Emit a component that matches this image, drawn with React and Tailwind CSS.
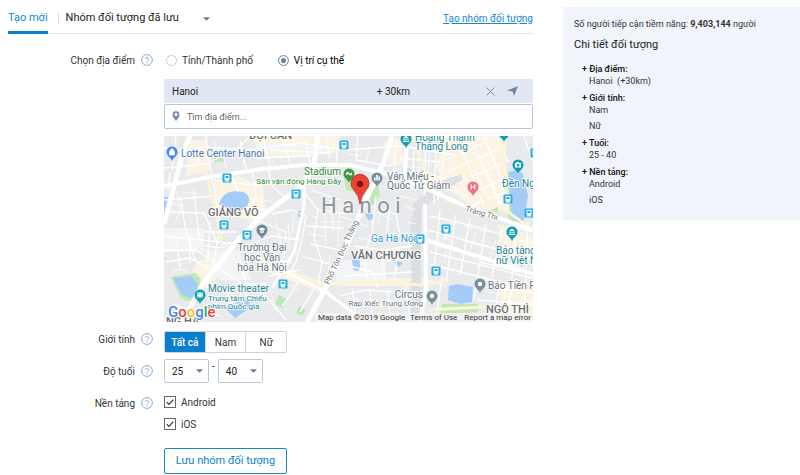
import React, { useState } from 'react';

const MINOR_ROADS = [
  'M164 148L186 151L204 147L250 150L300 143L345 150L400 146L460 156',
  'M164 168L205 164L236 150L250 136',
  'M176 136L172 170M206 136L212 180L220 222L214 262',
  'M164 200L190 198L214 196M168 212L204 213L216 240L232 248',
  'M180 196L186 232L196 262M194 190L199 238',
  'M164 236L202 240L236 244M164 250L196 250L214 262L206 290',
  'M166 262L190 258L212 270M176 236L180 268M190 236L190 262',
  'M232 176L238 192M252 170L256 196L248 214L262 222M268 168L272 186L288 200',
  'M240 140L246 170M262 136L270 166M284 136L290 164M306 140L310 164M326 136L330 158',
  'M270 150L330 153M256 158L310 156M338 140L336 166M358 136L356 160L390 166',
  'M272 214L292 210L306 216L302 240L296 262L280 290',
  'M250 244L272 236L300 240M258 258L292 262M268 276L300 270M262 222L286 232L284 258',
  'M240 262L248 290L266 296L286 320M220 270L240 282L252 306',
  'M228 256L216 272M224 300L236 284L266 284M300 280L282 306M316 286L300 312',
  'M304 192L318 210L314 238L322 262L318 284M312 190L340 200M318 210L348 214',
  'M306 226L344 228M310 244L340 250M302 256L336 266M330 200L334 230',
  'M368 206L396 214L400 236M376 196L372 232L366 250M390 206L386 238M354 246L384 250L412 246',
  'M350 266L372 272L378 288M364 262L368 280M380 250L386 284M398 248L394 284M344 276L412 272',
  'M340 296L366 290L396 292M352 288L356 316M370 290L372 316M388 292L390 318M406 286L410 318',
  'M386 150L382 166M396 140L394 184M414 150L412 190M426 140L424 196M436 150L434 204',
  'M400 158L440 162M408 172L446 178M422 186L460 192M446 140L438 200',
  'M430 216L474 226L532 244M428 230L500 250M430 252L532 278M440 210L434 270M456 214L446 282',
  'M470 218L460 276M486 224L474 300M502 230L492 276M516 234L508 320M430 264L500 282M442 276L436 320',
  'M462 240L492 248M452 222L444 240M480 262L520 272M428 280L446 286M478 300L532 304M500 282L494 320',
  'M456 136L466 160L484 206M470 136L480 160L500 204M484 136L498 170L508 206M496 136L508 160',
  'M448 172L500 148M456 184L510 160M462 196L508 178M470 206L506 192M446 160L486 142',
  'M524 136L532 160M528 222L524 322M508 226L532 232M474 286L532 292M340 216L352 220M176 306L220 316',
  'M204 232L236 232M206 246L226 248M210 222L208 258M220 228L222 246M170 172L168 190M214 180L262 186',
];

const ALLEYS = [
  'M196 152L200 164M214 140L218 158M222 150L226 168M176 190L180 210L174 226M184 192L198 194M172 204L186 206',
  'M258 198L272 202M256 208L270 212M262 190L262 216M276 222L282 248M288 222L290 250M294 214L292 232',
  'M312 216L318 218M308 234L326 236M320 222L344 222M324 204L326 244M340 204L338 246M330 256L328 276',
  'M356 224L368 226M376 212L392 220M380 206L378 226M358 238L370 240M360 280L360 290M382 260L396 262',
  'M400 196L416 200M404 206L416 210M406 222L416 224M418 152L420 186M430 146L428 184M402 166L422 168',
  'M436 236L452 240M438 246L470 254M446 250L444 264M464 226L490 232M476 232L470 250M496 240L490 258',
  'M500 262L520 266M484 280L506 284M486 292L506 294M506 284L504 304M446 148L492 136M470 150L492 166',
  'M474 170L486 196M482 162L496 190M452 168L460 178M490 180L502 204M346 298L360 300M374 304L388 306',
  'M250 298L264 300M240 290L244 304M270 288L276 312M290 284L300 292M206 268L220 290M172 270L188 270',
  'M272 160L276 166M280 144L296 146M312 146L324 148M348 154L362 156M370 146L366 164M216 300L240 306',
];

const MAIN_ROADS = [
  { d: 'M190 136L183 152L164 224', w: 5 },
  { d: 'M164 186L210 177L262 169L304 165L350 165L402 178L470 208L533 230', w: 4 },
  { d: 'M182 322L204 282L238 240L262 216L304 184L314 164L318 136', w: 5 },
  { d: 'M307 322L324 291L350 238L364 204L384 162L392 136', w: 5 },
  { d: 'M407 136L405 176', w: 4 },
  { d: 'M425 204L426 290L420 322', w: 4 },
  { d: 'M426 240L480 257L533 274', w: 4 },
  { d: 'M262 268L274 266L324 291L366 322', w: 3 },
  { d: 'M304 186L304 206L294 252L272 288', w: 3 },
];

const SECONDARY_ROADS = [
  'M204 166L214 204L222 244',
  'M256 260L324 288L360 322',
  'M324 284L372 282L424 285L448 280',
  'M414 136L424 168L446 200L464 206',
  'M454 136L462 168L490 206',
  'M500 136L506 174L508 212L530 228',
  'M428 310L500 306L533 308',
];

const TRANSIT = [
  [227, 178], [344, 145], [296, 194], [224, 225], [247, 235], [283, 284],
  [508, 199], [529, 213], [446, 229], [420, 239], [436, 271], [535, 153],
];

const PINS = [
  { x: 172, y: 152, color: '#4285f4', icon: 'bag' },
  { x: 349, y: 174, color: '#3c9c3f', icon: 'leaf' },
  { x: 377, y: 178, color: '#78909c', icon: 'chart' },
  { x: 406, y: 139, color: '#12a0ad', icon: 'museum' },
  { x: 504, y: 133, color: '#12a0ad', icon: 'museum' },
  { x: 518, y: 165, color: '#12a0ad', icon: 'camera' },
  { x: 473, y: 187, color: '#f06e82', icon: 'hospital' },
  { x: 262, y: 230, color: '#6f8796', icon: 'school' },
  { x: 512, y: 232, color: '#12a0ad', icon: 'museum' },
  { x: 200, y: 295, color: '#12a0ad', icon: 'film' },
  { x: 432, y: 296, color: '#78909c', icon: 'dot' },
  { x: 480, y: 284, color: '#78909c', icon: 'dot' },
];

const GLYPHS = {
  bag: <path d="M-2.5 -1h5v4h-5zM-1.3 -1v-1a1.3 1.3 0 0 1 2.6 0v1" fill="#fff" stroke="#fff" strokeWidth=".7" />,
  leaf: <path d="M-3 -1q2 -2 3 0t3 -1v3q-2 1 -3 -.5t-3 1z" fill="#fff" />,
  chart: <path d="M-3 2.5v-3h1.6v3zM-.8 2.5v-5.5h1.6v5.5zM1.4 2.5v-4h1.6v4z" fill="#fff" />,
  museum: <path d="M-3 -1L0 -3.2L3 -1zM-2.6 -.4h1.2v2h-1.2zM-.6 -.4h1.2v2h-1.2zM1.4 -.4h1.2v2h-1.2zM-3 2h6v1h-6z" fill="#fff" />,
  camera: <path fillRule="evenodd" d="M-3 -2h1.4l.6 -1h2l.6 1h1.4v4.5h-6zM0 -1.2a1.4 1.4 0 1 0 .01 0z" fill="#fff" />,
  hospital: <path d="M-1.8 -2.5v5M1.8 -2.5v5M-1.8 0h3.6" fill="none" stroke="#fff" strokeWidth="1.2" />,
  school: <path d="M-3.6 -.8L0 -2.6L3.6 -.8L0 1zM-2 .8L0 1.8L2 .8v1.4L0 3.2L-2 2.2z" fill="#fff" />,
  film: <path fillRule="evenodd" d="M-2.8 -2.5h5.6v5h-5.6zM-2 -1.8v1h1v-1zM-2 .8v1h1v-1zM1 -1.8v1h1v-1zM1 .8v1h1v-1z" fill="#fff" />,
  dot: <circle r="2.2" fill="#fff" />,
};

const TEAL = '#1e8794';
const SLATE = '#66737f';
const DISTRICT = '#6a6f74';

const PLACE_LABELS = [
  { x: 249, y: 139, text: 'ĐỘI CẤN', color: DISTRICT, size: 11, bold: true },
  { x: 181, y: 157, text: 'Lotte Center Hanoi', color: '#4a75b5', size: 10 },
  { x: 341, y: 175, text: 'Stadium', color: '#2f8b35', size: 10, anchor: 'end' },
  { x: 341, y: 184, text: 'Sân vận động Hàng Đẫy', color: '#2f8b35', size: 8, anchor: 'end' },
  { x: 208, y: 216, text: 'GIẢNG VÕ', color: DISTRICT, size: 11, bold: true },
  { x: 262, y: 251, text: 'Trường Đại', color: SLATE, size: 10, anchor: 'middle' },
  { x: 262, y: 261, text: 'học Văn', color: SLATE, size: 10, anchor: 'middle' },
  { x: 262, y: 271, text: 'hóa Hà Nội', color: SLATE, size: 10, anchor: 'middle' },
  { x: 208, y: 292, text: 'Movie theater', color: TEAL, size: 10 },
  { x: 208, y: 301, text: 'Trung tâm Chiếu', color: TEAL, size: 8 },
  { x: 208, y: 309, text: 'phim Quốc gia', color: TEAL, size: 8 },
  { x: 166, y: 325, text: 'NG HẠ', color: DISTRICT, size: 11, bold: true },
  { x: 387, y: 180, text: 'Văn Miếu -', color: SLATE, size: 10 },
  { x: 387, y: 189, text: 'Quốc Tử Giám', color: SLATE, size: 10 },
  { x: 415, y: 141, text: 'Hoàng Thành', color: TEAL, size: 10 },
  { x: 415, y: 150, text: 'Thăng Long', color: TEAL, size: 10 },
  { x: 502, y: 187, text: 'Đền Ng', color: TEAL, size: 10 },
  { x: 371, y: 242, text: 'Ga Hà Nội', color: '#2f9ccc', size: 10 },
  { x: 351, y: 259, text: 'VĂN CHƯƠNG', color: DISTRICT, size: 11, bold: true },
  { x: 423, y: 298, text: 'Circus', color: SLATE, size: 10, anchor: 'end' },
  { x: 423, y: 306, text: 'Rạp Xiếc Trung Ương', color: SLATE, size: 8, anchor: 'end' },
  { x: 488, y: 289, text: 'Báo Tiền P', color: SLATE, size: 10 },
  { x: 496, y: 254, text: 'Bảo tàng', color: TEAL, size: 10 },
  { x: 496, y: 264, text: 'nữ Việt N', color: TEAL, size: 10 },
  { x: 486, y: 313, text: 'NGÔ THÌ', color: DISTRICT, size: 11, bold: true },
  { x: 465, y: 211, text: 'Tràng Thi', color: '#777', size: 8, rotate: 16 },
  { x: 329, y: 285, text: 'Phố Tôn Đức Thắng', color: '#777', size: 8, rotate: -65 },
];

function MapView() {
  return (
    <svg
      viewBox="164 136 369 186"
      preserveAspectRatio="xMidYMid slice"
      className="mt-[7px] block h-[186px] w-full font-['Roboto',sans-serif]"
      role="img"
      aria-label="Hanoi"
    >
      <rect x="164" y="136" width="369" height="186" fill="#e9eaec" />

      {/* Commercial areas */}
      <g fill="#fbf4e4">
        <path d="M190 140h16l4 30l-24 6zM214 182l24 -6l18 8l8 24l-16 12l-32 -8zM250 136l90 0l-6 18l-70 4z" />
        <path d="M196 262l18 -6l6 20l-16 12l-14 -8zM232 186l30 -6l4 30l-16 14zM268 262l60 22l-4 10l-60 -24z" />
        <path d="M340 278h84v8h-84zM444 136h62l2 76l-34 -4l-30 -22l-8 -20zM500 282h33v40h-33zM498 224l35 12v26l-30 -10z" />
        <path d="M384 142l16 -4l4 26l-14 2zM424 170l24 10l-8 14l-16 -4z" />
      </g>
      <g fill="#f3f4f5">
        <path d="M256 144h70v8h-70zM204 250l34 0l14 30l-32 0zM164 228h40v24h-40zM336 260h50v22h-50z" />
      </g>

      {/* Parks */}
      <g fill="#c0e8b4">
        <path d="M171 277l25 -4l5 6l-4 24l-16 -4zM344 176h14l4 18l-16 -4zM370 194l8 -10l2 12l-10 12z" />
        <path d="M214 158h10v4h-10zM405 164l8 8l-10 2zM490 210l8 -3v6zM442 304h36v8l-38 2z" />
        <path d="M279 295l8 4l-4 9l-8 -4zM299 306l7 4l-4 6l-6 -3zM504 176l6 -6l4 52l-6 -4z" />
      </g>

      {/* Water */}
      <g fill="#a3ccf8">
        <path d="M219 204q4 -13 18 -13q13 1 12 11q-3 9 -14 9q-6 -1 -16 -7z" />
        <path d="M173 278l18 -2l7 8l-3 16l-14 -6zM164 197h5l-2 18l-3 4zM225 308l18 -8l12 -2l-8 12l-12 8z" />
        <path d="M509 172q8 -4 14 2l5 22l-5 28l-10 -4l-3 -18zM449 286l8 -2l16 3l-1 15l-12 2l-12 -4z" />
        <path d="M352 260q5 -3 8 1v8q-4 4 -7 0zM365 214l6 -2l3 5l-5 4zM298 211h4v6h-4zM391 259l12 4l-4 4z" />
      </g>

      {/* Railway */}
      <path d="M417 322V206L440 186L462 178" fill="none" stroke="#dcdee1" strokeWidth="8" />
      <path d="M412 216V322M422 210L446 186" fill="none" stroke="#cfd2d6" strokeWidth="1" />

      <g fill="none" stroke="#fff" strokeLinejoin="round">
        {ALLEYS.map((d) => (
          <path key={d} d={d} strokeWidth=".8" />
        ))}
        {MINOR_ROADS.map((d) => (
          <path key={d} d={d} strokeWidth="1.3" />
        ))}
        {SECONDARY_ROADS.map((d) => (
          <path key={d} d={d} strokeWidth="3" stroke="#fdf3d6" />
        ))}
        {MAIN_ROADS.map((road) => (
          <path key={road.d} d={road.d} strokeWidth={road.w} />
        ))}
      </g>

      {TRANSIT.map(([x, y]) => (
        <g key={`${x}-${y}`} transform={`translate(${x} ${y})`}>
          <rect x="-4.5" y="-4.5" width="9" height="9" rx="1" fill="#27b0e6" />
          <path fillRule="evenodd" d="M-2.5 -3h5v5l-1 .5l.8 1h-4.6l.8 -1l-1 -.5zM-1.6 -2v2h3.2v-2z" fill="#fff" />
        </g>
      ))}

      <text x="321" y="213" fontSize="22" fill="#8e949c" stroke="#f4f5f6" strokeWidth="2" paintOrder="stroke">
        H a n o i
      </text>

      {PLACE_LABELS.map((label) => (
        <text
          key={label.text}
          x={label.x}
          y={label.y}
          fontSize={label.size}
          fontWeight={label.bold ? 500 : 400}
          fill={label.color}
          stroke="#fff"
          strokeWidth="2"
          strokeOpacity=".8"
          paintOrder="stroke"
          textAnchor={label.anchor || 'start'}
          transform={label.rotate ? `rotate(${label.rotate} ${label.x} ${label.y})` : undefined}
        >
          {label.text}
        </text>
      ))}

      {PINS.map((pin) => (
        <g key={`${pin.x}-${pin.y}`} transform={`translate(${pin.x} ${pin.y})`}>
          <path d="M0 9.500Q-1 6.500 -4 4.200A5.800 5.800 0 1 1 4 4.200Q1 6.500 0 9.500z" fill={pin.color} stroke="#fff" strokeWidth=".4" />
          {GLYPHS[pin.icon]}
        </g>
      ))}

      {/* Selected location */}
      <g transform="translate(360 184)">
        <path d="M0 20Q-1 12 -6 6A9 9 0 1 1 6 6Q1 12 0 20z" fill="#ea4335" stroke="#b5281f" strokeWidth=".8" />
        <circle r="3.2" fill="#8a1510" />
      </g>

      {/* Attribution */}
      <rect x="315" y="313" width="218" height="9" fill="#f5f5f5" fillOpacity=".7" />
      <g fontSize="8" fill="#333">
        <text x="318" y="320">Map data ©2019 Google</text>
        <text x="410" y="320">Terms of Use</text>
        <text x="531" y="320" textAnchor="end">Report a map error</text>
      </g>
      <text x="168" y="317" fontSize="15" fontWeight="500" stroke="#fff" strokeWidth="2" paintOrder="stroke">
        <tspan fill="#4285f4">G</tspan>
        <tspan fill="#ea4335">o</tspan>
        <tspan fill="#fbbc05">o</tspan>
        <tspan fill="#4285f4">g</tspan>
        <tspan fill="#34a853">l</tspan>
        <tspan fill="#ea4335">e</tspan>
      </text>
    </svg>
  );
}

function Caret({ className }) {
  return (
    <svg viewBox="0 0 8 4" className={`pointer-events-none absolute h-1 w-[7px] fill-[#6b7c90] ${className}`} aria-hidden="true">
      <path d="M0 0h8L4 4z" />
    </svg>
  );
}

function HelpIcon() {
  return (
    <svg viewBox="0 0 12 12" className="h-3 w-3 shrink-0" fill="none" stroke="#7fa3cc" aria-hidden="true">
      <circle cx="6" cy="6" r="5.4" strokeWidth=".9" />
      <path d="M4.500 4.900a1.500 1.500 0 1 1 2.200 1.300q-.7 .4 -.7 1.100M6 8.300v.9" strokeWidth=".9" />
    </svg>
  );
}

function FormRow({ label, className, children }) {
  return (
    <div className={`grid grid-cols-[145px_minmax(0,1fr)] gap-x-[11px] ${className}`}>
      <div className="flex h-6 items-center justify-end gap-1.5">
        <span>{label}</span>
        <HelpIcon />
      </div>
      <div className="min-w-0">{children}</div>
    </div>
  );
}

function RadioOption({ label, value, selected, onSelect }) {
  return (
    <label className={`flex items-center gap-[5px] ${selected === value ? 'text-black' : ''}`}>
      <input
        type="radio"
        name="location-type"
        value={value}
        checked={selected === value}
        onChange={() => onSelect(value)}
        className="h-[11px] w-[11px] appearance-none rounded-full border border-[#c9ccd1] bg-white checked:border-[#8b99aa] checked:bg-[#71809a] checked:shadow-[inset_0_0_0_2px_white]"
      />
      {label}
    </label>
  );
}

function AgeSelect({ label, value, onChange }) {
  return (
    <div className="relative">
      <select
        aria-label={label}
        value={value}
        onChange={(e) => onChange(e.target.value)}
        className="h-6 w-[45px] appearance-none rounded-xs border border-[#b9c7dc] bg-white pl-[7px] text-[#222]"
      >
        {[18, 25, 30, 35, 40, 45, 50].map((age) => (
          <option key={age}>{age}</option>
        ))}
      </select>
      <Caret className="top-2.5 right-1.5" />
    </div>
  );
}

function Checkbox({ label }) {
  return (
    <label className="relative flex h-[22px] items-center gap-[5px]">
      <input type="checkbox" defaultChecked className="peer h-3 w-3 appearance-none border border-[#666] bg-white" />
      <svg
        viewBox="0 0 12 12"
        className="pointer-events-none invisible absolute left-0 h-3 w-3 peer-checked:visible"
        fill="none"
        stroke="#333"
        strokeWidth="1.2"
        aria-hidden="true"
      >
        <path d="M2.800 6.200L4.900 8.400L9.400 3.600" />
      </svg>
      {label}
    </label>
  );
}

const GENDERS = ['Tất cả', 'Nam', 'Nữ'];

const DETAILS = [
  { title: 'Địa điểm', values: ['Hanoi  (+30km)'] },
  { title: 'Giới tính', values: ['Nam', 'Nữ'] },
  { title: 'Tuổi', values: ['25 - 40'] },
  { title: 'Nền tảng', values: ['Android', 'iOS'] },
];

export default function App() {
  const [locationType, setLocationType] = useState('point');
  const [gender, setGender] = useState('Tất cả');
  const [minAge, setMinAge] = useState('25');
  const [maxAge, setMaxAge] = useState('40');

  return (
    <div className="flex min-h-screen items-start gap-[30px] bg-white pl-2 font-['Roboto',sans-serif] text-[10px] text-[#333]">
      <main className="min-w-0 flex-1">
        {/* Tabs */}
        <div className="flex h-[34px] items-stretch border-b border-[#e2e4e8] text-[11px]">
          <button type="button" className="-mb-px border-b-3 border-[#0d7fcc] pt-1.5 text-[#1488cf]">
            Tạo mới
          </button>
          <div className="mt-3 mb-2 ml-2.5 border-l border-[#ddd]" />
          <div className="relative ml-[7px] flex pt-1">
            <select aria-label="Nhóm đối tượng đã lưu" className="w-[148px] appearance-none bg-transparent text-[#222]">
              <option>Nhóm đối tượng đã lưu</option>
            </select>
            <Caret className="top-[17px] right-1" />
          </div>
          <a href="#new-group" className="ml-auto self-center pt-1 text-[10px] text-[#1488cf] underline">
            Tạo nhóm đối tượng
          </a>
        </div>

        <FormRow label="Chọn địa điểm" className="mt-[14px]">
          <div className="flex h-6 items-center gap-[25px] pl-0.5">
            <RadioOption label="Tỉnh/Thành phố" value="city" selected={locationType} onSelect={setLocationType} />
            <RadioOption label="Vị trí cụ thể" value="point" selected={locationType} onSelect={setLocationType} />
          </div>

          <div className="mt-[7px] flex h-6 items-center bg-[#e2e8f3] px-2 text-[#222]">
            <span className="w-[58%]">Hanoi</span>
            <span>+ 30km</span>
            <button type="button" aria-label="Xóa" className="ml-auto">
              <svg viewBox="0 0 9 9" className="h-[9px] w-[9px]" fill="none" stroke="#7c8da1">
                <path d="M.5 .5L8.500 8.500M8.500 .5L.5 8.500" />
              </svg>
            </button>
            <button type="button" aria-label="Định vị" className="mr-[7px] ml-3">
              <svg viewBox="0 0 11 10" className="h-2.5 w-[11px] fill-[#7188a3]">
                <path d="M11 0L7 10L5.600 5.400L0 4.600z" />
              </svg>
            </button>
          </div>

          <div className="relative mt-px">
            <svg viewBox="0 0 8 10" className="absolute top-[7px] left-2 h-2.5 w-2" aria-hidden="true">
              <path fillRule="evenodd" fill="#6f89a6" d="M4 10Q.6 6.200 .6 3.600A3.400 3.400 0 0 1 7.400 3.600Q7.400 6.200 4 10zM4 1.800A1.700 1.700 0 1 0 4.010 1.800z" />
            </svg>
            <input
              type="text"
              aria-label="Tìm địa điểm"
              placeholder="Tìm địa điểm..."
              className="block h-[25px] w-full rounded-xs border border-[#b9c7dc] pr-2 pl-[22px] text-[9px] placeholder-[#666]"
            />
          </div>

          <MapView />
        </FormRow>

        <FormRow label="Giới tính" className="mt-[5px]">
          <div className="mt-1 flex h-[22px] w-[123px] overflow-hidden rounded-xs border border-[#cfd3da]">
            {GENDERS.map((item) => (
              <button
                key={item}
                type="button"
                onClick={() => setGender(item)}
                className={`flex-1 border-l border-[#d5d8de] first:border-l-0 ${
                  gender === item ? 'bg-[#0a80cc] font-medium text-white' : 'bg-white'
                }`}
              >
                {item}
              </button>
            ))}
          </div>
        </FormRow>

        <FormRow label="Độ tuổi" className="mt-1.5">
          <div className="flex gap-[3px]">
            <AgeSelect label="Tuổi từ" value={minAge} onChange={setMinAge} />
            <span>-</span>
            <AgeSelect label="Tuổi đến" value={maxAge} onChange={setMaxAge} />
          </div>
        </FormRow>

        <FormRow label="Nền tảng" className="mt-2">
          <Checkbox label="Android" />
          <Checkbox label="iOS" />
          <button type="button" className="mt-[13px] h-[26px] w-[123px] rounded-xs border border-[#1488cf] bg-white text-[11px] text-[#0d7fcc]">
            Lưu nhóm đối tượng
          </button>
        </FormRow>
      </main>

      {/* Audience summary */}
      <aside className="mt-[7px] w-[237px] shrink-0 bg-[#f1f4fa] px-[11px] pt-[9px] pb-[9px] text-[9px] leading-4">
        <p>
          Số người tiếp cận tiềm năng: <b className="font-bold">9,403,144</b> người
        </p>
        <h2 className="mt-[5px] text-[11px] leading-4 text-[#222]">Chi tiết đối tượng</h2>
        <dl className="mt-2.5 pl-2">
          {DETAILS.map((item) => (
            <div key={item.title} className="mb-[5px]">
              <dt className="leading-3 font-medium text-[#111]">+ {item.title}:</dt>
              {item.values.map((value) => (
                <dd key={value} className="mb-1 pl-[7px] leading-3 whitespace-pre last:mb-0">
                  {value}
                </dd>
              ))}
            </div>
          ))}
        </dl>
      </aside>
    </div>
  );
}
